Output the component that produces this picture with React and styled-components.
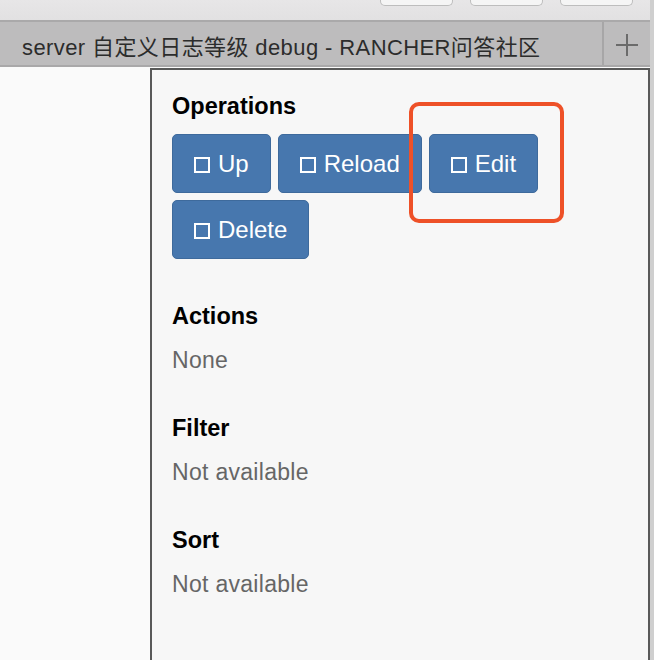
import React from "react";
import styled, { createGlobalStyle } from "styled-components";

const GlobalStyle = createGlobalStyle`
  html, body {
    margin: 0;
    padding: 0;
    background: #cfcfcf;
  }
  body {
    font-family: "Liberation Sans", Arial, "Noto Sans CJK SC", sans-serif;
  }
  * { box-sizing: border-box; }
`;

const Window = styled.div`
  width: 650px;
  height: 660px;
  overflow: hidden;
  display: flex;
  flex-direction: column;
  background: #fafafa;
`;

const TitleBar = styled.div`
  height: 22px;
  flex: none;
  background: linear-gradient(#e7e6e7, #e2e1e2);
  border-bottom: 2px solid #aaa9aa;
  display: flex;
  justify-content: flex-end;
  align-items: flex-start;
  gap: 17px;
  padding-right: 17px;
`;

const WinButton = styled.div`
  width: 73px;
  height: 6px;
  background: #f5f5f5;
  border: 1px solid #bdbdbd;
  border-top: none;
  border-radius: 0 0 5px 5px;
`;

const TabBar = styled.div`
  height: 45px;
  flex: none;
  display: flex;
  background: #bdbcbd;
  border-bottom: 2px solid #a9a8a9;
`;

const Tab = styled.div`
  flex: 1;
  display: flex;
  align-items: center;
  padding: 2px 0 0 22px;
  border-right: 2px solid #a7a6a7;
  font-family: "Liberation Sans", "Noto Sans CJK SC", sans-serif;
  font-size: 22px;
  letter-spacing: 0.4px;
  color: #2c2c2c;
  white-space: nowrap;
`;

const NewTab = styled.div`
  width: 46px;
  flex: none;
  display: flex;
  align-items: center;
  justify-content: center;
  padding-top: 3px;
`;

const Content = styled.div`
  flex: 1;
  display: flex;
  padding: 1px 0 0 150px;
`;

const Panel = styled.div`
  flex: 1;
  background: #f7f7f7;
  border: 2px solid #595959;
  border-bottom: none;
  padding: 22px 20px 0 20px;
`;

const Section = styled.section`
  margin-bottom: ${(p) => (p.$gap ? p.$gap : 40)}px;
`;

const Heading = styled.h3`
  margin: 0;
  font-size: 23.5px;
  line-height: 28px;
  font-weight: bold;
  color: #000;
`;

const Value = styled.div`
  margin-top: 16px;
  font-size: 23px;
  line-height: 28px;
  letter-spacing: 0.3px;
  color: #666;
`;

const ButtonGroup = styled.div`
  margin-top: 14px;
  display: flex;
  flex-wrap: wrap;
  gap: 7px;
`;

const Button = styled.button`
  height: 59px;
  padding: 0 21px;
  display: inline-flex;
  align-items: center;
  gap: 8px;
  background: #4777ae;
  border: 1px solid #3e6a9c;
  border-radius: 5px;
  color: #fff;
  font-family: "Liberation Sans", Arial, sans-serif;
  font-size: 24px;
  line-height: 1;
  cursor: pointer;
`;

const Glyph = styled.span`
  width: 16px;
  height: 16px;
  margin-top: 2px;
  border: 2px solid #fff;
  flex: none;
`;

const Marked = styled.div`
  position: relative;
  display: inline-flex;
`;

const Highlight = styled.div`
  position: absolute;
  top: -32px;
  left: -20px;
  right: -26px;
  bottom: -30px;
  border: 4.5px solid #ee5128;
  border-radius: 10px;
  pointer-events: none;
`;

const PlusIcon = () => (
  <svg width="22" height="22" viewBox="0 0 22 22">
    <path d="M11 0V22M0 11H22" stroke="#6b6b6b" strokeWidth="2" fill="none" />
  </svg>
);

const OpButton = ({ label }) => (
  <Button>
    <Glyph />
    {label}
  </Button>
);

export default function App() {
  return (
    <>
      <GlobalStyle />
      <Window>
        <TitleBar>
          <WinButton />
          <WinButton />
          <WinButton />
        </TitleBar>
        <TabBar>
          <Tab>server 自定义日志等级 debug - RANCHER问答社区</Tab>
          <NewTab>
            <PlusIcon />
          </NewTab>
        </TabBar>
        <Content>
          <Panel>
            <Section $gap={43}>
              <Heading>Operations</Heading>
              <ButtonGroup>
                <OpButton label="Up" />
                <OpButton label="Reload" />
                <Marked>
                  <OpButton label="Edit" />
                  <Highlight />
                </Marked>
                <OpButton label="Delete" />
              </ButtonGroup>
            </Section>
            <Section>
              <Heading>Actions</Heading>
              <Value>None</Value>
            </Section>
            <Section>
              <Heading>Filter</Heading>
              <Value>Not available</Value>
            </Section>
            <Section>
              <Heading>Sort</Heading>
              <Value>Not available</Value>
            </Section>
          </Panel>
        </Content>
      </Window>
    </>
  );
}
